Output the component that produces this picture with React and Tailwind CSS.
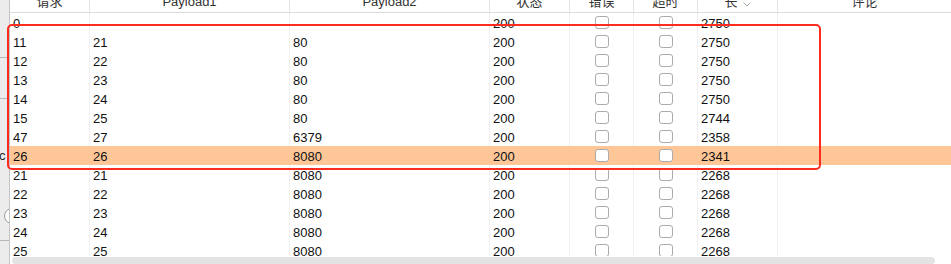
import React from 'react';

const columns = [
  { key: 'req', label: '请求', w: 'w-[80px]' },
  { key: 'p1', label: 'Payload1', w: 'w-[200px]' },
  { key: 'p2', label: 'Payload2', w: 'w-[200px]' },
  { key: 'status', label: '状态', w: 'w-[80px]' },
  { key: 'err', label: '错误', w: 'w-[64px]' },
  { key: 'timeout', label: '超时', w: 'w-[64px]' },
  { key: 'len', label: '长', w: 'w-[80px]' },
  { key: 'note', label: '评论', w: 'flex-1' },
];

const rows = [
  ['0', '', '', '200', '2750'],
  ['11', '21', '80', '200', '2750'],
  ['12', '22', '80', '200', '2750'],
  ['13', '23', '80', '200', '2750'],
  ['14', '24', '80', '200', '2750'],
  ['15', '25', '80', '200', '2744'],
  ['47', '27', '6379', '200', '2358'],
  ['26', '26', '8080', '200', '2341', true],
  ['21', '21', '8080', '200', '2268'],
  ['22', '22', '8080', '200', '2268'],
  ['23', '23', '8080', '200', '2268'],
  ['24', '24', '8080', '200', '2268'],
  ['25', '25', '8080', '200', '2268'],
];

const Checkbox = () => (
  <div className="w-[14px] h-[13px] rounded-[3px] border border-[#ababab] bg-white" />
);

const App = () => {
  return (
    <div
      className="relative flex w-[951px] h-[264px] overflow-hidden bg-white text-[13px] text-[#111]"
      style={{ fontFamily: '"Liberation Sans", "Noto Sans CJK SC", sans-serif' }}
    >
      {/* neighbouring panel, cut off */}
      <div className="relative w-[10px] h-full shrink-0 overflow-hidden bg-[#ececec] border-r border-[#c4c4c4]">
        <div className="absolute left-0 top-[57px] w-[9px] h-px bg-[#b8b8b8]" />
        <div className="absolute left-0 top-[98px] w-[9px] h-px bg-[#b8b8b8]" />
        <div className="absolute left-[-1px] top-[146px] leading-[19px] text-[#222]">c</div>
        <div className="absolute left-[4px] top-[208px] w-[16px] h-[16px] rounded-full border border-[#9a9a9a] bg-white" />
        <div className="absolute left-0 top-[240px] w-[9px] h-px bg-[#b8b8b8]" />
      </div>

      <div className="flex flex-col flex-1 min-w-0">
        {/* header */}
        <div className="flex h-[13px] shrink-0 overflow-hidden border-b border-[#dcdcdc] text-[#333]">
          {columns.map((c) => (
            <div
              key={c.key}
              className={`${c.w} h-full shrink-0 flex justify-center border-r border-[#e2e2e2] last:border-r-0`}
            >
              <div className="leading-[13px] -mt-[5px] flex items-start gap-[5px]">
                {c.label}
                {c.key === 'len' && (
                  <svg width="8" height="5" viewBox="0 0 8 5" className="mt-[7px]">
                    <path d="M0.5 0.5 L4 4 L7.5 0.5" fill="none" stroke="#a8a8a8" strokeWidth="1" />
                  </svg>
                )}
              </div>
            </div>
          ))}
        </div>

        {/* body */}
        <div className="flex-1 min-h-0 overflow-hidden">
          {rows.map((r, i) => {
            const hl = r[5];
            return (
              <div
                key={i}
                className={`flex h-[19px] leading-[21px] ${hl ? 'bg-[#ffc697]' : ''}`}
              >
                <div className={`w-[80px] shrink-0 pl-[3px] border-r ${hl ? 'border-transparent' : 'border-[#f0f0f0]'}`}>{r[0]}</div>
                <div className={`w-[200px] shrink-0 pl-[3px] border-r ${hl ? 'border-transparent' : 'border-[#f0f0f0]'}`}>{r[1]}</div>
                <div className={`w-[200px] shrink-0 pl-[3px] border-r ${hl ? 'border-transparent' : 'border-[#f0f0f0]'}`}>{r[2]}</div>
                <div className={`w-[80px] shrink-0 pl-[3px] border-r ${hl ? 'border-transparent' : 'border-[#f0f0f0]'}`}>{r[3]}</div>
                <div className={`w-[64px] shrink-0 flex items-center justify-center border-r ${hl ? 'border-transparent' : 'border-[#f0f0f0]'}`}>
                  <Checkbox />
                </div>
                <div className={`w-[64px] shrink-0 flex items-center justify-center border-r ${hl ? 'border-transparent' : 'border-[#f0f0f0]'}`}>
                  <Checkbox />
                </div>
                <div className={`w-[80px] shrink-0 pl-[3px] border-r ${hl ? 'border-transparent' : 'border-[#f0f0f0]'}`}>{r[4]}</div>
                <div className="flex-1" />
              </div>
            );
          })}
        </div>

        {/* horizontal scrollbar */}
        <div className="h-[8px] shrink-0 pl-[2px] pt-[1px]">
          <div className="w-[923px] h-[7px] rounded-full bg-[#e3e3e3]" />
        </div>
      </div>

      {/* red annotation box */}
      <div className="absolute left-[7px] top-[24px] w-[814px] h-[146px] rounded-[5px] border-[2.5px] border-[#ff2b1f] pointer-events-none" />
    </div>
  );
};

export default App;
